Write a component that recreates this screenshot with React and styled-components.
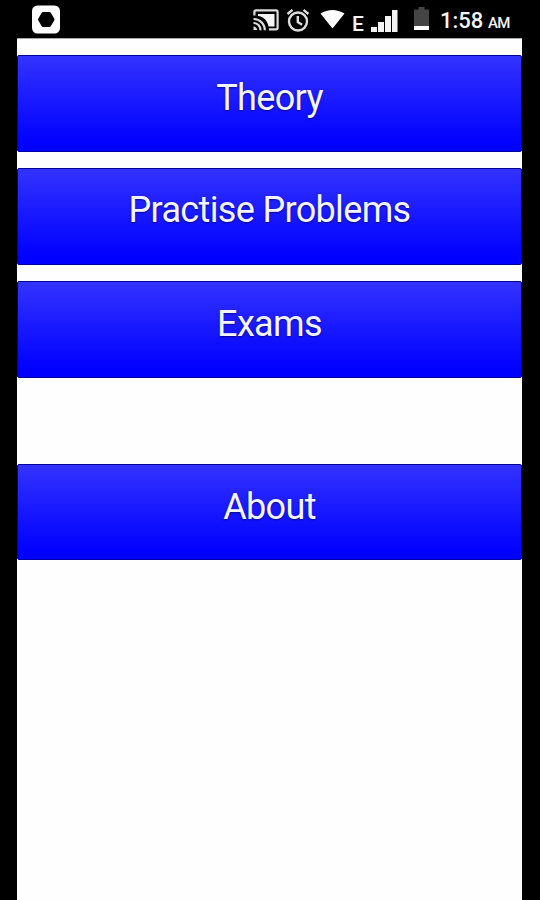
import React from 'react'
import styled, { createGlobalStyle } from 'styled-components';

const buttons = [
    { title: 'Theory', height: 97, gap: 16, pad: 21 },
    { title: 'Practise Problems', height: 97, gap: 16, pad: 20 },
    { title: 'Exams', height: 97, gap: 86, pad: 21 },
    { title: 'About', height: 96, gap: 0, pad: 20.5 },
];

export default function App() {
    return (
        <>
            <GlobalStyle />
            <Screen>
                <StatusBar>
                    <RecorderIcon />
                    <Indicators>
                        <CastIcon />
                        <AlarmIcon />
                        <WifiIcon />
                        <Network>E</Network>
                        <SignalIcon />
                        <BatteryIcon />
                        <Clock>1:58</Clock>
                        <Period>AM</Period>
                    </Indicators>
                </StatusBar>
                <Menu>
                    {buttons.map(({ title, height, gap, pad }) => (
                        <MenuButton key={title} $height={height} $gap={gap} $pad={pad}>
                            <Label>{title}</Label>
                        </MenuButton>
                    ))}
                </Menu>
            </Screen>
        </>
    )
}

function RecorderIcon() {
    return (
        <Icon width="28" height="29" $top={5}>
            <rect x="0" y="0.5" width="28" height="28" rx="5.5" fill="#fff" />
            <path d="M11 8.500h6.500l3.500 6-3.500 6h-6.500l-3.500-6z" fill="#000" stroke="#000" strokeWidth="3" strokeLinejoin="round" />
        </Icon>
    )
}

function CastIcon() {
    return (
        <Icon width="26" height="22" $top={9} fill="none" stroke="#dcdcdc" strokeWidth="2.2">
            <path d="M1.400 6.500V3q0-1.600 1.600-1.600h20q1.600 0 1.600 1.600v15.800q0 1.600-1.600 1.600h-7" />
            <path d="M5 5h16.500v12.500h-6C14.500 11.500 10.500 7.500 5 7z" fill="#f4f4f4" stroke="none" />
            <path d="M0.500 10c6 0 11.300 4.500 11.300 11.300M0.500 14c4 0 7 3 7 7.300" />
            <path d="M0.500 17.500c2 0 3.600 1.600 3.600 3.600H0.500z" fill="#dcdcdc" stroke="none" />
        </Icon>
    )
}

function AlarmIcon() {
    return (
        <Icon width="24" height="24" $top={9} $left={7} fill="none" stroke="#dcdcdc" strokeWidth="2.4">
            <circle cx="12" cy="12.500" r="9" />
            <path d="M11.800 7v6l4.300 2.800M1.500 5l5-4.100M22.500 5l-5-4.100" />
        </Icon>
    )
}

function WifiIcon() {
    return (
        <Icon width="26" height="20" $top={9} $left={10}>
            <path d="M0.500 4.500C8 -0.300 17 -0.300 24.500 4.500L12.500 19.500z" fill="#fff" />
        </Icon>
    )
}

function SignalIcon() {
    return (
        <Icon width="27" height="22" $top={10} $left={8}>
            <path d="M0 17h6v5H0zM7 12h6v10H7zM14 6h6v16h-6zM21 0h5.500v22h-5.500z" fill="#f4f4f4" />
        </Icon>
    )
}

function BatteryIcon() {
    return (
        <Icon width="16" height="24" $top={7} $left={16}>
            <path d="M0 2.500h4.500V0h6v2.500h4.500v16.500H0z" fill="#444" />
            <path d="M0 19h15v4H0z" fill="#fff" />
        </Icon>
    )
}

const GlobalStyle = createGlobalStyle`
    body{
        margin:0;
        background:#000;
        font-family:Roboto, sans-serif;
    }
`;

const Screen = styled.div`
    box-sizing:border-box;
    height:900px;
    width:540px;
    padding:0 17px;
    display:flex;
    flex-direction:column;
    background-color:#000;
    overflow:hidden;
`;

const StatusBar = styled.header`
    height:38px;
    padding:0 12px 0 15px;
    display:flex;
    justify-content:space-between;
    color:#f4f4f4;
    flex-shrink:0;
`;

const Indicators = styled.div`
    display:flex;
    align-items:flex-start;
`;

const Icon = styled.svg`
    display:block;
    flex-shrink:0;
    margin-top:${props => props.$top}px;
    margin-left:${props => props.$left || 0}px;
`;

const Network = styled.span`
    width:11px;
    margin:12px 0 0 6px;
    font-size:21px;
    font-weight:500;
    letter-spacing:-1px;
    line-height:24px;
`;

const Clock = styled.span`
    width:44px;
    margin:8px 0 0 10px;
    font-size:22px;
    font-weight:500;
    line-height:25px;
`;

const Period = styled.span`
    width:23px;
    margin:12px 0 0 4px;
    font-size:15px;
    font-weight:500;
    letter-spacing:-0.6px;
    line-height:22px;
`;

const Menu = styled.main`
    box-sizing:border-box;
    flex:1;
    width:505px;
    padding-top:16px;
    border-top:1px solid #aaa;
    background-color:#fefefe;
`;

const MenuButton = styled.button`
    box-sizing:border-box;
    width:100%;
    height:${props => props.$height}px;
    margin:0 0 ${props => props.$gap}px;
    padding:${props => props.$pad}px 0 0;
    display:flex;
    align-items:flex-start;
    justify-content:center;
    border:1px solid #00009c;
    border-radius:2px;
    background:linear-gradient(#3333ff, #0000ff 92%);
    color:#f4f4ff;
    font-family:inherit;
    cursor:pointer;
`;

const Label = styled.span`
    font-size:36px;
    line-height:42px;
    letter-spacing:-0.65px;
    white-space:nowrap;
    text-shadow:0 1px 2px rgba(0,0,90,0.7);
`;
